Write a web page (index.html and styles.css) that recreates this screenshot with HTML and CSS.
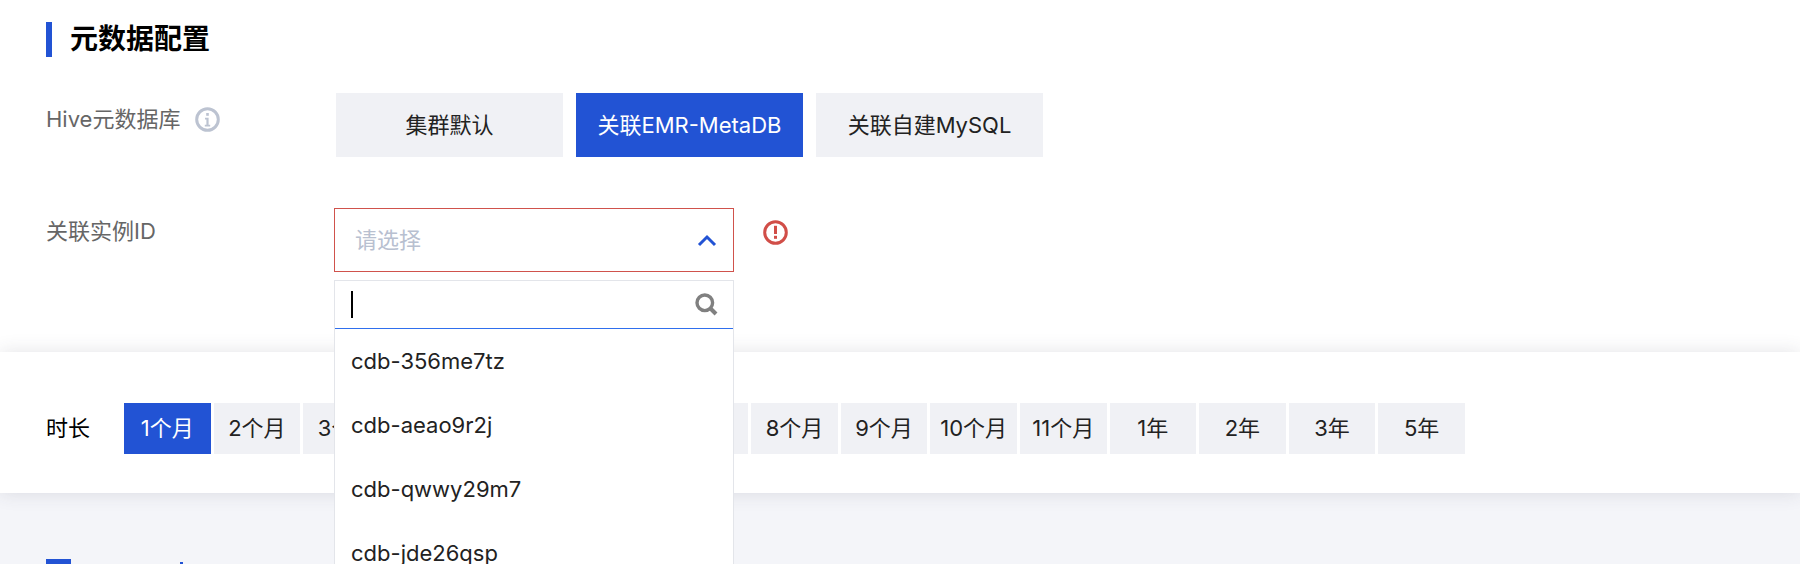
FILE: index.html
```html
<!DOCTYPE html>
<html>
<head>
<meta charset="utf-8">
<link rel="stylesheet" href="styles.css">
</head>
<body>

<div class="config">
	<h2 class="section-title">元数据配置</h2>

	<div class="form-row row-hive">
		<div class="form-label">Hive元数据库
			<svg class="info-icon" viewBox="0 0 25 25" width="25" height="25">
				<circle cx="12.5" cy="12.5" r="10.8" fill="none" stroke="#bcc3d1" stroke-width="3"/>
				<rect x="11.2" y="6" width="2.6" height="2.8" fill="#bcc3d1"/>
				<path d="M10 10.8h3.6v7h1.6v1.6h-5.4v-1.6h1.6v-5.4H10z" fill="#bcc3d1"/>
			</svg>
		</div>
		<div class="btn-group">
			<div class="btn">集群默认</div>
			<div class="btn active">关联EMR-MetaDB</div>
			<div class="btn">关联自建MySQL</div>
		</div>
	</div>

	<div class="form-row row-instance">
		<div class="form-label">关联实例ID</div>
		<div class="select-wrap">
			<div class="select">
				<span class="placeholder">请选择</span>
				<svg class="chevron" viewBox="0 0 20 13" width="20" height="13">
					<path d="M2 11L10 3l8 8" fill="none" stroke="#2253d4" stroke-width="3"/>
				</svg>
			</div>
			<div class="dropdown">
				<div class="search">
					<span class="caret"></span>
					<svg class="search-icon" viewBox="0 0 23 23" width="23" height="23">
						<circle cx="9.8" cy="9.8" r="7.8" fill="none" stroke="#808080" stroke-width="3.4"/>
						<path d="M15 15l6 6" fill="none" stroke="#808080" stroke-width="4"/>
					</svg>
				</div>
				<div class="option">cdb-356me7tz</div>
				<div class="option">cdb-aeao9r2j</div>
				<div class="option">cdb-qwwy29m7</div>
				<div class="option">cdb-jde26qsp</div>
			</div>
		</div>
		<svg class="error-icon" viewBox="0 0 25 25" width="25" height="25">
			<circle cx="12.5" cy="12.5" r="10.8" fill="none" stroke="#d14e48" stroke-width="3"/>
			<rect x="11" y="5.8" width="3" height="8.2" fill="#d14e48"/>
			<rect x="11" y="15.8" width="3" height="3" fill="#d14e48"/>
		</svg>
	</div>
</div>

<div class="duration">
	<div class="duration-label">时长</div>
	<div class="tabs">
		<div class="tab active">1个月</div>
		<div class="tab">2个月</div>
		<div class="tab">3个月</div>
		<div class="tab">4个月</div>
		<div class="tab">5个月</div>
		<div class="tab">6个月</div>
		<div class="tab">7个月</div>
		<div class="tab">8个月</div>
		<div class="tab">9个月</div>
		<div class="tab">10个月</div>
		<div class="tab">11个月</div>
		<div class="tab">1年</div>
		<div class="tab">2年</div>
		<div class="tab">3年</div>
		<div class="tab">5年</div>
	</div>
</div>

<div class="footer-area">
	<div class="footer-title">
		<span class="cut-t"></span>
		<span class="cut-dot"></span>
	</div>
</div>

</body>
</html>
```

FILE: styles.css
```css
* {
	box-sizing: border-box;
}
html, body {
	height: 100%;
}
body {
	margin: 0;
	height: 564px;
	overflow: hidden;
	display: flex;
	flex-direction: column;
	background-color: #fff;
	color: #222;
	font: 22px/30px Inter, "Noto Sans CJK SC", sans-serif;
}
.config {
	height: 352px;
	padding: 22px 46px 0;
}
.section-title {
	margin: 0;
	height: 35px;
	padding-left: 18px;
	border-left: 6px solid #2253d4;
	font: bold 28px/35px Inter, "Noto Sans CJK SC", sans-serif;
	color: #000;
}
.form-row {
	display: flex;
	align-items: flex-start;
}
.row-hive {
	margin-top: 36px;
}
.row-instance {
	margin-top: 51px;
}
.form-label {
	width: 288px;
	display: flex;
	align-items: center;
	color: #666;
	padding-top: 11px;
}
.row-instance .form-label {
	padding-top: 8px;
}
.info-icon {
	margin-left: 15px;
}
.btn-group {
	display: flex;
	gap: 13px;
	margin-left: 2px;
}
.btn {
	width: 227px;
	height: 64px;
	line-height: 64px;
	text-align: center;
	background-color: #f0f1f5;
}
.btn.active {
	background-color: #2253d4;
	color: #fff;
}
.select-wrap {
	position: relative;
	width: 400px;
}
.select {
	height: 64px;
	padding: 0 16px 0 20px;
	display: flex;
	align-items: center;
	justify-content: space-between;
	border: 1px solid #d0524c;
}
.placeholder {
	color: #b8c0d0;
}
.error-icon {
	margin: 12px 0 0 29px;
}
.dropdown {
	position: absolute;
	z-index: 5;
	left: 0;
	top: 72px;
	width: 400px;
	background-color: #fff;
	border: 1px solid #e3e5ea;
}
.search {
	height: 48px;
	padding: 0 15px 0 16px;
	display: flex;
	align-items: center;
	justify-content: space-between;
	border-bottom: 1px solid #2f6fed;
}
.caret {
	width: 2px;
	height: 27px;
	background-color: #000;
}
.option {
	height: 64px;
	line-height: 64px;
	padding-left: 16px;
}
.duration {
	height: 141px;
	flex-shrink: 0;
	padding: 51px 46px 0;
	display: flex;
	background-color: #fff;
	box-shadow: 0 0 18px rgba(54, 58, 80, 0.14);
	position: relative;
}
.duration-label {
	width: 78px;
	line-height: 51px;
	color: #000;
}
.tabs {
	display: flex;
	gap: 3px;
}
.tab {
	width: 86.6px;
	height: 51px;
	line-height: 51px;
	text-align: center;
	background-color: #f0f1f5;
}
.tab.active {
	background-color: #2253d4;
	color: #fff;
}
.footer-area {
	flex: 1;
	padding: 66px 46px 0;
	background-color: #f4f5f9;
}
.footer-title {
	display: flex;
	height: 5px;
}
.cut-t {
	width: 25px;
	height: 5px;
	background-color: #2253d4;
}
.cut-dot {
	width: 3px;
	height: 2px;
	margin: 3px 0 0 109px;
	background-color: #2253d4;
}
```
